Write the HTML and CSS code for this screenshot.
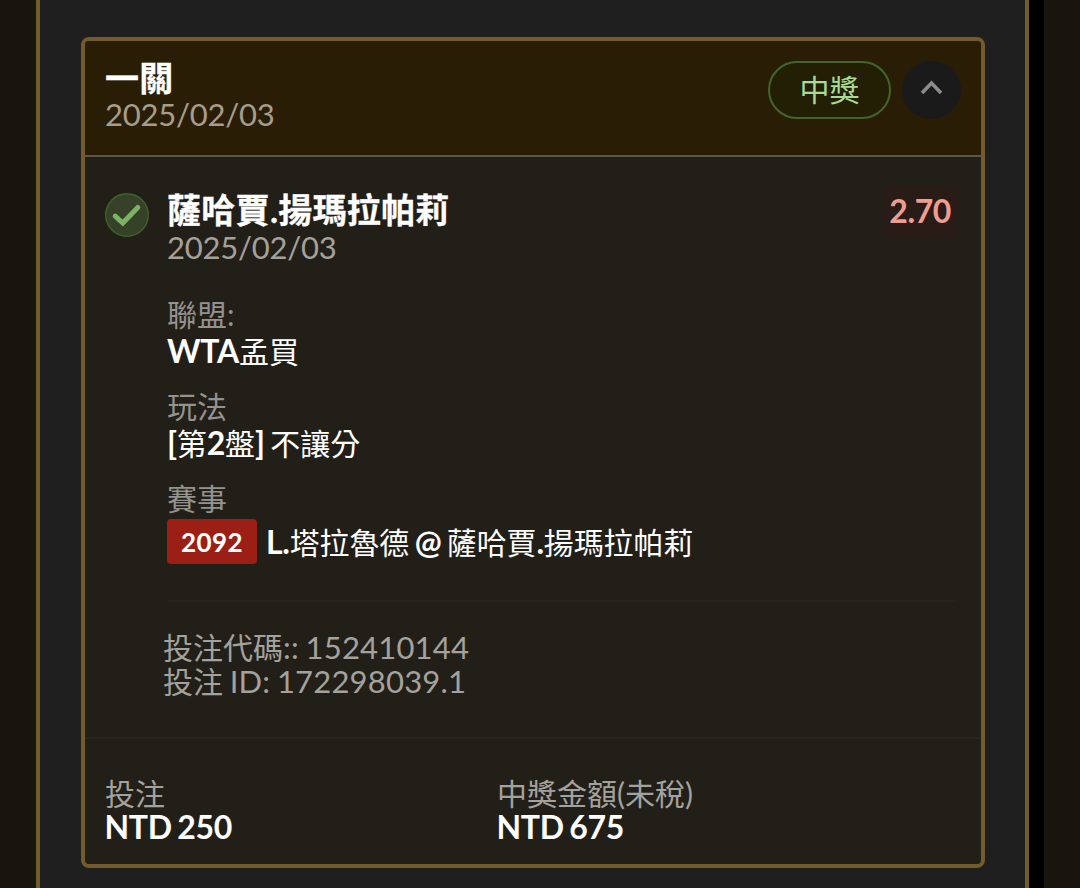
FILE: index.html
```html
<!DOCTYPE html>
<html lang="zh-Hant">
  <head>
    <meta charset="UTF-8" />
    <meta name="viewport" content="width=device-width, initial-scale=1.0" />
    <title>投注</title>
    <link rel="stylesheet" href="styles.css">
  </head>
  <body>
    <div class="page">
      <main class="panel">
        <section class="ticket">
          <header class="ticket-header">
            <div>
              <h2 class="title">一關</h2>
              <div class="date">2025/02/03</div>
            </div>
            <div class="actions">
              <span class="status">中獎</span>
              <button type="button" class="toggle">
                <svg width="24" height="16" viewBox="0 0 24 16">
                  <path d="M2 13 11.500 3l9.500 10" fill="none" stroke="#8b8b8b" stroke-width="3.600" />
                </svg>
              </button>
            </div>
          </header>

          <div class="bet">
            <svg class="check" width="44" height="44" viewBox="0 0 44 44">
              <circle cx="22" cy="22" r="21.300" fill="#374029" stroke="#3c6428" stroke-width="1.400" />
              <path d="M10.200 23.200 17.800 30 32.800 14.500" fill="none" stroke="#7cb266" stroke-width="5" stroke-linecap="round" />
            </svg>
            <div class="bet-body">
              <div class="bet-top">
                <div>
                  <h3 class="title">薩哈賈.揚瑪拉帕莉</h3>
                  <div class="date">2025/02/03</div>
                </div>
                <span class="odds">2.70</span>
              </div>
              <dl class="details">
                <dt>聯盟:</dt>
                <dd><b>WTA</b>孟買</dd>
                <dt>玩法</dt>
                <dd><b>[</b>第<b>2</b>盤<b>] </b>不讓分</dd>
                <dt>賽事</dt>
                <dd class="match">
                  <span class="code">2092</span>
                  <span><b>L.</b>塔拉魯德<b> @ </b>薩哈賈<b>.</b>揚瑪拉帕莉</span>
                </dd>
              </dl>
              <div class="ids">
                <div>投注代碼<i>:: 152410144</i></div>
                <div>投注<i> ID: 172298039.1</i></div>
              </div>
            </div>
          </div>

          <footer class="totals">
            <div>
              <div class="label">投注</div>
              <div class="amount">NTD 250</div>
            </div>
            <div>
              <div class="label">中獎金額(未稅)</div>
              <div class="amount">NTD 675</div>
            </div>
          </footer>
        </section>
      </main>
    </div>
  </body>
</html>
```
FILE: styles.css
```css
* {
  box-sizing: border-box;
}
body {
  margin: 0;
  height: 888px;
  overflow: hidden;
  background-color: #18150f;
  font-family: Lato, "Noto Sans CJK TC", sans-serif;
  font-size: 30px;
  color: #fff;
}
.page {
  height: 888px;
  margin: 0 36px;
  padding-right: 15px;
  background-color: #000;
}
.panel {
  height: 888px;
  padding: 37px 40px 0 41px;
  border: solid #735b2b;
  border-width: 0 4px;
  background-color: #1f1f1f;
}
.ticket {
  height: 831px;
  border: 4px solid #735b2b;
  border-radius: 8px;
  background-color: #221f19;
  overflow: hidden;
}
.ticket-header {
  display: flex;
  justify-content: space-between;
  height: 116px;
  padding: 20px 20px 0;
  border-bottom: 2px solid #5c554a;
  background-color: #291e05;
}
.title {
  margin: -1px 0 0;
  font-size: 34px;
  font-weight: 700;
  line-height: 36px;
  letter-spacing: 0.3px;
  -webkit-text-stroke: 0.3px #fff;
}
.date {
  font-size: 31px;
  line-height: 37px;
  letter-spacing: -0.25px;
  color: #a4a19b;
}
.ticket-header .date {
  color: #a69d8c;
}
.bet .date {
  line-height: 39px;
}
.actions {
  display: flex;
  gap: 11px;
}
.status {
  width: 123px;
  height: 58px;
  border: 2px solid #42652d;
  border-radius: 29px;
  background-color: #221f05;
  color: #a9dc92;
  text-align: center;
  line-height: 52px;
}
.toggle {
  display: flex;
  align-items: center;
  justify-content: center;
  width: 59px;
  height: 58px;
  padding: 0 0 4px;
  border: none;
  border-radius: 50%;
  background-color: #1a1a1a;
  cursor: pointer;
}
.bet {
  display: flex;
  gap: 18px;
  height: 580px;
  padding: 36px 24px 0 20px;
}
.check {
  flex: none;
}
.bet-body {
  flex: 1;
}
.bet-top {
  display: flex;
  justify-content: space-between;
  height: 103px;
}
.odds {
  height: 52px;
  margin-top: -8px;
  padding: 0 6px;
  background-color: #291c16;
  color: #f09d91;
  font-size: 32px;
  font-weight: 700;
  line-height: 51px;
  letter-spacing: -0.4px;
}
.details {
  margin: 0;
  height: 306px;
  border-bottom: 2px solid #25231e;
}
dt {
  line-height: 37px;
  color: #94928d;
}
dd {
  margin: 0 0 19px;
  line-height: 36px;
}
b {
  font-size: 32px;
  font-weight: 700;
  letter-spacing: -0.3px;
  word-spacing: -2px;
}
.match {
  display: flex;
  align-items: center;
  gap: 9px;
  padding-top: 2px;
  font-size: 29.9px;
}
.code {
  width: 90px;
  height: 45px;
  border-radius: 4px;
  background-color: #9c1f16;
  font-size: 26px;
  font-weight: 700;
  line-height: 47px;
  letter-spacing: 0.4px;
  text-align: center;
}
.ids {
  margin: 28px 0 0 -4px;
  color: #a4a29d;
  line-height: 34px;
}
i {
  font-size: 31px;
  font-style: normal;
  letter-spacing: 0.2px;
  word-spacing: -1.5px;
}
.totals {
  display: grid;
  grid-template-columns: 392px 1fr;
  padding: 37px 20px 0;
  border-top: 2px solid #27251f;
}
.label {
  color: #a4a29d;
  line-height: 34px;
}
.amount {
  margin-left: -0.5px;
  font-size: 32px;
  font-weight: 700;
  line-height: 34px;
  letter-spacing: -0.3px;
  word-spacing: -2px;
}
```
